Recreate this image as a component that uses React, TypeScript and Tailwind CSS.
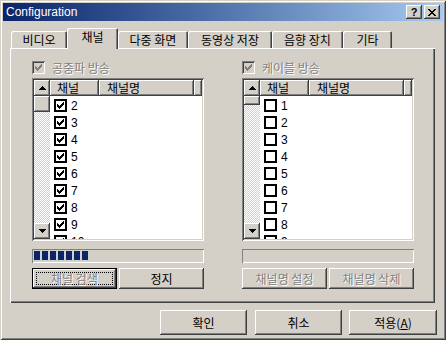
import React from "react";

const raised =
  "shadow-[inset_-1px_-1px_#404040,inset_1px_1px_#ffffff,inset_-2px_-2px_#808080,inset_2px_2px_#d4d0c8]";
const sunken =
  "shadow-[inset_1px_1px_#808080,inset_-1px_-1px_#ffffff,inset_2px_2px_#404040,inset_-2px_-2px_#d4d0c8]";
const grayText = "text-[#808080] [text-shadow:1px_1px_0_#ffffff]";

const tabs = ["비디오", "채널", "다중 화면", "동영상 저장", "음향 장치", "기타"];
const tabWidths = ["w-[56px]", "w-[51px]", "w-[70px]", "w-[84px]", "w-[71px]", "w-[49px]"];

function Check({ color = "#000" }: { color?: string }) {
  return (
    <svg width="7" height="7" viewBox="0 0 7 7" shapeRendering="crispEdges" fill={color}>
      <rect x="6" y="0" width="1" height="1" />
      <rect x="5" y="1" width="2" height="1" />
      <rect x="0" y="2" width="1" height="1" />
      <rect x="4" y="2" width="3" height="1" />
      <rect x="0" y="3" width="2" height="1" />
      <rect x="3" y="3" width="3" height="1" />
      <rect x="0" y="4" width="5" height="1" />
      <rect x="1" y="5" width="3" height="1" />
      <rect x="2" y="6" width="1" height="1" />
    </svg>
  );
}

function Arrow({ down }: { down?: boolean }) {
  return (
    <svg width="7" height="4" viewBox="0 0 7 4" shapeRendering="crispEdges">
      <polygon points={down ? "0,0 7,0 3.5,4" : "3.5,0 7,4 0,4"} fill="#000" />
    </svg>
  );
}

function ScrollButton({ down }: { down?: boolean }) {
  return (
    <div className={`w-4 h-4 shrink-0 bg-[#d4d0c8] flex items-center justify-center ${raised}`}>
      <Arrow down={down} />
    </div>
  );
}

function GroupCheck({ label }: { label: string }) {
  return (
    <div className="h-[13px] flex items-center gap-[7px]">
      <span className={`w-[13px] h-[13px] bg-[#d4d0c8] flex items-center justify-center ${sunken}`}>
        <Check color="#808080" />
      </span>
      <span className={`text-[12px] leading-none ${grayText}`}>{label}</span>
    </div>
  );
}

function ChannelList({ nums, checked, thumb }: { nums: number[]; checked: boolean; thumb: string }) {
  return (
    <div className={`w-[172px] h-[163px] p-[2px] bg-white flex ${sunken}`}>
      <div className="w-4 h-full flex flex-col bg-[image:repeating-conic-gradient(#d4d0c8_0%_25%,#ffffff_0%_50%)] bg-[length:2px_2px]">
        <ScrollButton />
        <div className={`w-4 shrink-0 bg-[#d4d0c8] ${thumb} ${raised}`} />
        <div className="flex-1" />
        <ScrollButton down />
      </div>
      <div className="flex-1 flex flex-col overflow-hidden">
        <div className="h-[16px] shrink-0 flex text-[12px] leading-none text-black">
          <div className={`w-[49px] bg-[#d4d0c8] flex items-center pl-[7px] ${raised}`}>채널</div>
          <div className={`w-[95px] bg-[#d4d0c8] flex items-center pl-[8px] ${raised}`}>채널명</div>
          <div className={`flex-1 bg-[#d4d0c8] ${raised}`} />
        </div>
        <div className="pt-[1px] flex flex-col">
          {nums.map((n) => (
            <div key={n} className="h-[17px] shrink-0 flex items-center pl-[4px] gap-[4px]">
              <span className="w-[13px] h-[13px] border-2 border-black bg-white flex items-center justify-center">
                {checked && <Check />}
              </span>
              <span className="text-[12px] leading-none font-['Liberation_Sans',sans-serif]">{n}</span>
            </div>
          ))}
        </div>
      </div>
    </div>
  );
}

function Progress({ blocks }: { blocks: number }) {
  return (
    <div className="w-[172px] h-[14px] mt-[8px] px-[2px] py-[2px] flex gap-[2px] shadow-[inset_1px_1px_#808080,inset_-1px_-1px_#ffffff]">
      {Array.from({ length: blocks }).map((_, i) => (
        <div key={i} className="w-[6px] h-[9px] bg-[#0a246a]" />
      ))}
    </div>
  );
}

function Btn({
  label,
  width,
  disabled,
  focused,
}: {
  label: React.ReactNode;
  width: string;
  disabled?: boolean;
  focused?: boolean;
}) {
  if (focused) {
    return (
      <div className={`${width} h-[21px] border border-black`}>
        <div className={`w-full h-full bg-[#d4d0c8] p-[3px] ${raised}`}>
          <div className={`w-full h-full border border-dotted border-black flex items-center justify-center text-[12px] leading-none ${grayText}`}>
            {label}
          </div>
        </div>
      </div>
    );
  }
  return (
    <div
      className={`${width} h-[21px] bg-[#d4d0c8] flex items-center justify-center text-[12px] leading-none ${raised} ${
        disabled ? grayText : "text-black"
      }`}
    >
      {label}
    </div>
  );
}

export default function App() {
  return (
    <div className="w-[446px] h-[340px] bg-[#d4d0c8] p-[3px] flex flex-col font-['Noto_Sans_CJK_KR',sans-serif] shadow-[inset_1px_1px_#d4d0c8,inset_-1px_-1px_#404040,inset_2px_2px_#ffffff,inset_-2px_-2px_#808080]">
      {/* Title bar */}
      <div className="h-[18px] shrink-0 bg-gradient-to-r from-[#0a246a] to-[#a6caf0] flex items-center justify-between pl-[3px] pr-[3px]">
        <span className="text-white text-[12px] leading-none font-['Liberation_Sans',sans-serif]">Configuration</span>
        <div className="flex gap-[2px]">
          <div className={`w-4 h-[14px] bg-[#d4d0c8] flex items-center justify-center text-[11px] font-bold leading-none font-['Liberation_Sans',sans-serif] ${raised}`}>
            ?
          </div>
          <div className={`w-4 h-[14px] bg-[#d4d0c8] flex items-center justify-center ${raised}`}>
            <svg width="8" height="7" viewBox="0 0 8 7" shapeRendering="crispEdges">
              <path d="M0 0h2v1h-2zM6 0h2v1h-2zM1 1h2v1h-2zM5 1h2v1h-2zM2 2h4v1h-4zM3 3h2v1h-2zM2 4h4v1h-4zM1 5h2v1h-2zM5 5h2v1h-2zM0 6h2v1h-2zM6 6h2v1h-2z" fill="#000" />
            </svg>
          </div>
        </div>
      </div>

      {/* Tabs */}
      <div className="ml-[7px] mt-[7px] w-[425px] flex flex-col">
        <div className="h-[20px] flex items-end pl-px">
          {tabs.map((t, i) =>
            i === 1 ? (
              <div
                key={t}
                className={`${tabWidths[i]} h-[21px] -mb-px relative z-10 bg-[#d4d0c8] rounded-t-[2px] flex items-center justify-center pb-[3px] text-[12px] leading-none shadow-[inset_1px_1px_#ffffff,inset_-1px_0_#404040,inset_-2px_0_#808080]`}
              >
                {t}
              </div>
            ) : (
              <div
                key={t}
                className={`${tabWidths[i]} h-[17px] bg-[#d4d0c8] rounded-t-[2px] flex items-center justify-center text-[12px] leading-none shadow-[inset_1px_1px_#ffffff,inset_-1px_0_#404040,inset_-2px_0_#808080]`}
              >
                {t}
              </div>
            )
          )}
        </div>
        <div className="h-[255px] flex gap-[38px] pl-[22px] pt-[13px] shadow-[inset_1px_1px_#ffffff,inset_-1px_-1px_#404040,inset_-2px_-2px_#808080]">
          <div className="w-[172px] flex flex-col">
            <GroupCheck label="공중파 방송" />
            <div className="mt-[4px]">
              <ChannelList nums={[2, 3, 4, 5, 6, 7, 8, 9, 10]} checked thumb="h-[16px]" />
            </div>
            <Progress blocks={7} />
            <div className="mt-[5px] flex gap-[2px]">
              <Btn label="채널 검색" width="w-[85px]" focused />
              <Btn label="정지" width="w-[85px]" />
            </div>
          </div>
          <div className="w-[172px] flex flex-col">
            <GroupCheck label="케이블 방송" />
            <div className="mt-[4px]">
              <ChannelList nums={[1, 2, 3, 4, 5, 6, 7, 8, 9]} checked={false} thumb="h-[9px]" />
            </div>
            <Progress blocks={0} />
            <div className="mt-[5px] flex gap-[2px]">
              <Btn label="채널명 설정" width="w-[85px]" disabled />
              <Btn label="채널명 삭제" width="w-[85px]" disabled />
            </div>
          </div>
        </div>
      </div>

      {/* Dialog buttons */}
      <div className="mt-[7px] mr-[6px] flex justify-end">
        <div className={`w-[87px] h-[25px] bg-[#d4d0c8] flex items-center justify-center text-[12px] leading-none ${raised}`}>확인</div>
        <div className={`ml-[8px] w-[87px] h-[25px] bg-[#d4d0c8] flex items-center justify-center text-[12px] leading-none ${raised}`}>취소</div>
        <div className={`ml-[7px] w-[88px] h-[25px] bg-[#d4d0c8] flex items-center justify-center text-[12px] leading-none ${raised}`}>
          적용(<span className="underline">A</span>)
        </div>
      </div>
    </div>
  );
}
